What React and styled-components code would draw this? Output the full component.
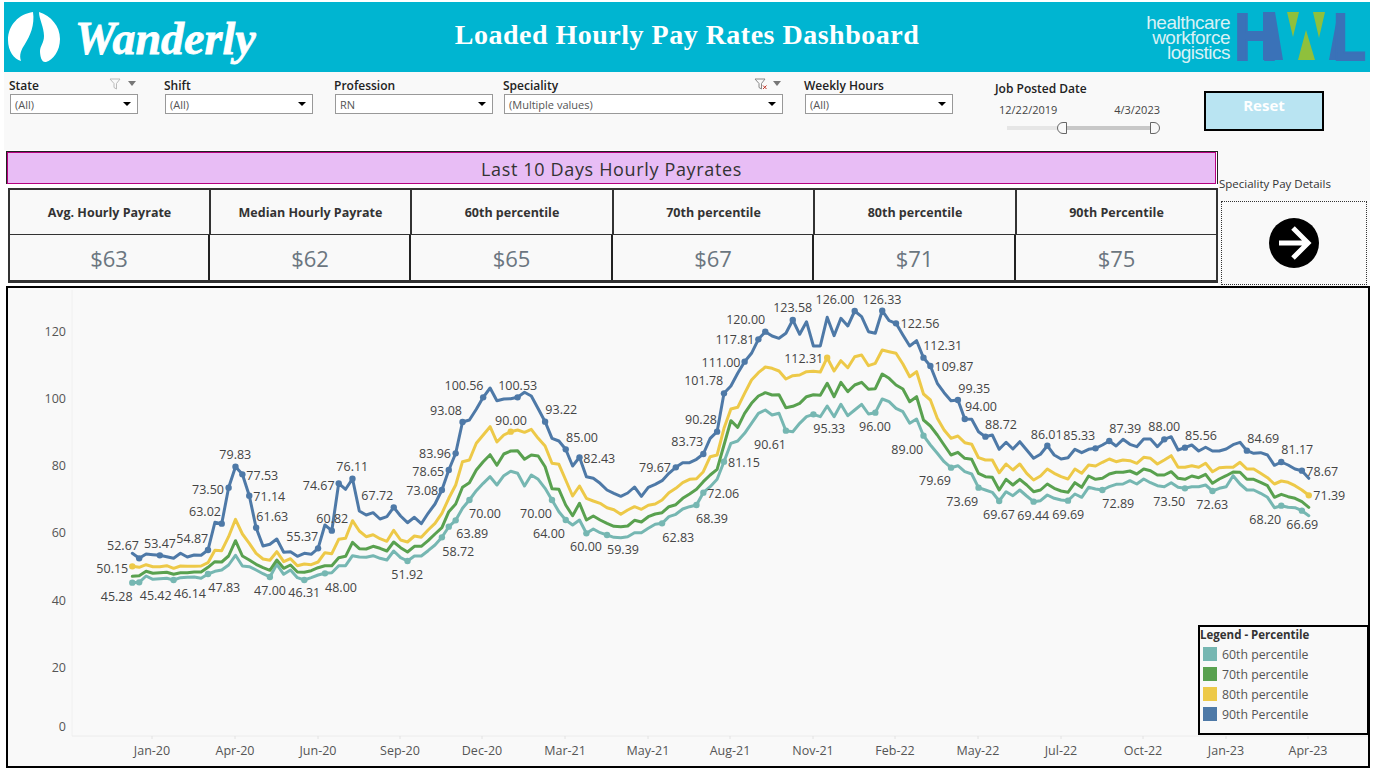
import React from "react";
import styled, { createGlobalStyle } from "styled-components";

const trace = (base, values) => values.map((v) => base + v / 3);

const COLORS = { p60: "#76b7b2", p70: "#59a14f", p80: "#edc948", p90: "#4e79a7" };

const blueY = [
  ...trace(430, [370,385,372,374,376,380,385,370,381,375,376,360,277,281,173,110,133,197,293,348,343,327,367,365,379,370,373,355,285,302,160,178,146,243,255,248,267,260,232,258,278,262,281,250,222,180,120]),
  ...trace(360, [280,186,180,148,112,84,122,117,116,112,97,108,146,185,235,243,268,318,292,350,355,370,390,400,409,399,381,409,382,373,362,340,322,308,308,298,282,235,215,100,78,40]),
  ...trace(290, [215,190,148,125,138,145,130,90,133,95,168,168,82,137,85,108,63,80,125,130,62,92,100,135,168,152,203,228,280,308,332,330,387,388,425,440,435,478,457,477,455]),
  ...trace(410, [120,145,133,107,135,147,143,118,128,118,115,105,93,108,88,103,110,87,87,110,88,80,120,113,105,123,112,123,123,117,104,97,122,130,128,135,166,156,165,177,182,205]),
];

const yellowY = [
  ...trace(430, [409,412,404,410,410,407,415,408,409,409,408,398,361,362,320,268,312,340,370,387,391,365,395,386,407,402,404,396,368,371,328,325,272,303,320,314,326,334,301,330,336,318,322,300,280,250,205]),
  ...trace(360, [375,305,300,250,225,200,246,225,215,210,217,208,235,258,310,313,360,408,378,415,423,430,443,449,463,450,440,448,436,432,420,398,385,368,358,356,335,290,285,205,147,142]),
  ...trace(290, [310,270,248,231,235,243,267,257,255,245,244,246,203,243,212,233,200,195,227,220,180,185,190,222,260,245,312,330,385,420,445,438,458,463,503,510,510,548,522,540,522]),
  ...trace(410, [190,210,198,177,190,200,207,177,190,165,168,157,147,155,150,152,160,142,145,162,150,137,172,172,167,172,160,185,173,172,172,157,177,177,190,203,222,213,217,227,240,256]),
];

const greenY = [
  ...trace(430, [439,437,424,430,428,427,433,428,428,426,426,412,395,396,378,332,378,390,403,413,421,390,415,405,426,427,422,413,407,407,383,379,337,356,357,349,355,363,336,353,366,349,349,332,312,293,245]),
  ...trace(360, [432,382,368,330,305,284,316,282,273,272,298,285,288,320,386,388,435,467,430,480,468,480,490,499,500,498,481,486,470,462,458,440,434,415,402,388,365,345,328,255,182,202]),
  ...trace(290, [370,340,318,308,315,314,353,349,340,320,314,316,280,320,277,305,285,277,298,296,252,265,285,297,335,320,390,408,435,465,495,487,505,508,550,560,562,600,568,585,568]),
  ...trace(410, [225,245,240,222,235,243,247,218,232,198,208,205,192,187,187,183,192,177,182,195,195,185,205,208,198,203,193,220,207,197,186,187,208,208,217,227,262,253,260,265,275,292]),
];

const tealY = [
  ...trace(430, [458,457,438,448,446,445,450,443,442,441,445,432,424,420,405,376,408,410,420,431,441,403,433,420,443,450,443,435,430,428,407,407,377,381,382,377,385,390,363,383,393,378,378,362,345,322,290]),
  ...trace(360, [481,445,420,392,370,350,375,347,334,340,378,345,358,385,420,455,480,495,480,520,507,518,525,532,533,530,518,518,505,493,490,470,463,447,440,435,398,380,358,305,250,243]),
  ...trace(290, [430,400,370,360,375,370,422,425,400,380,373,380,348,380,343,377,360,343,372,368,327,335,355,365,400,387,437,465,490,515,533,527,545,552,593,600,607,633,605,617,600]),
  ...trace(410, [258,275,272,255,265,270,272,252,262,232,237,240,230,223,222,212,222,207,218,227,230,218,232,235,230,230,225,243,235,230,197,222,240,240,250,262,293,287,292,293,302,317]),
];

const xAt = (i) => 132.3 + i * 6.88;

const SERIES = [
  { color: COLORS.p60, ys: tealY, dots: [0,1,6,11,20,25,28,40,45,46,47,49,61,63,66,69,77,82,83,86,95,99,108,115,119,123,126,131,136,141,153,157,167,170] },
  { color: COLORS.p70, ys: greenY, dots: [] },
  { color: COLORS.p80, ys: yellowY, dots: [0,55,101,171] },
  { color: COLORS.p90, ys: blueY, dots: [1,4,11,13,14,15,16,17,18,27,29,30,32,38,45,46,47,48,51,56,60,63,65,79,83,85,86,89,91,92,96,105,109,111,115,116,120,121,124,133,140,142,150,153,162,167,170] },
];

const LABELS = [
  ["52.67",123,545.7],["53.47",160,543],["54.87",192.3,538.7],["63.02",205,511],["73.50",208,489],["79.83",235.3,454.3],
  ["77.53",262.3,475.7],["71.14",269.3,496.7],["61.63",272.3,516],["55.37",302.3,536.7],["60.82",332.3,518.3],["74.67",318.7,485],
  ["76.11",352.3,466.7],["67.72",377.3,495.7],["73.08",422.3,490.7],["78.65",428.3,471.7],["83.96",435,453],["50.15",112.3,568.3],
  ["45.28",116.7,596.7],["45.42",155.7,595.7],["46.14",190,593.3],["47.83",224.3,587.3],["47.00",270,590.7],["46.31",304.3,592.7],
  ["48.00",341,587.7],["51.92",407.3,574.3],["100.56",464,385],["93.08",446,410],["90.00",511,420.7],["100.53",517.7,385],
  ["93.22",561.3,409.7],["85.00",582,437.7],["82.43",599.3,458.7],["79.67",655,467.3],["83.73",687.3,441.7],["90.28",701,419.3],
  ["101.78",703.7,380.7],["70.00",485,513.7],["70.00",536,513.7],["63.89",472.3,533.7],["58.72",458.3,551.7],["64.00",549,533.7],
  ["60.00",586,546.7],["59.39",623,549.7],["62.83",678.3,537.7],["68.39",712,518.3],["72.06",723.3,493.3],["81.15",744,462.3],
  ["90.61",770,444.3],["111.00",721,362.7],["117.81",735,339.3],["120.00",745.7,319.3],["123.58",792.7,307.7],["126.00",835,299.3],
  ["126.33",882,299],["122.56",920,323.3],["112.31",942.7,345.3],["109.87",954,366.7],["99.35",974.3,388.7],["94.00",981,406.3],
  ["88.72",1001,424.7],["112.31",803.7,358.3],["95.33",829.3,428.3],["96.00",875,426.7],["89.00",907.3,449.3],["79.69",935,480.7],
  ["73.69",962.3,501.7],["69.67",999,514.3],["86.01",1046.7,434],["85.33",1079.3,435.7],["87.39",1125.3,428.3],["88.00",1164.3,426.7],
  ["85.56",1201,435.7],["84.69",1263.3,438.7],["81.17",1297.3,449.3],["78.67",1322.3,471.3],["71.39",1329.3,495.7],["66.69",1302.3,524.3],
  ["68.20",1265.3,519.3],["72.63",1212.3,504.7],["73.50",1169.3,501.3],["72.89",1118.3,503.7],["69.69",1068.3,514.3],["69.44",1033.3,515.7],
];

const Y_TICKS = [["120",331],["100",398],["80",465],["60",532],["40",600],["20",667],["0",726]];
const X_TICKS = [["Jan-20",152],["Apr-20",235],["Jun-20",318],["Sep-20",400],["Dec-20",482],["Mar-21",565],["May-21",648],["Aug-21",730],["Nov-21",813],["Feb-22",895],["May-22",978],["Jul-22",1061],["Oct-22",1143],["Jan-23",1226],["Apr-23",1308]];

const KPIS = [
  ["Avg. Hourly Payrate", "$63"],
  ["Median Hourly Payrate", "$62"],
  ["60th percentile", "$65"],
  ["70th percentile", "$67"],
  ["80th percentile", "$71"],
  ["90th Percentile", "$75"],
];

const LEGEND = [
  ["60th percentile", COLORS.p60],
  ["70th percentile", COLORS.p70],
  ["80th percentile", COLORS.p80],
  ["90th Percentile", COLORS.p90],
];

const Funnel = ({ cleared }) => (
  <svg width="14" height="12" viewBox="0 0 14 12">
    <path d="M1 1h10L7.5 5.5V11L5 9.5V5.5z" fill="none" stroke={cleared ? "#888" : "#bbb"} strokeWidth="1" />
    {cleared && <path d="M9 7.5l3.5 3.5M12.5 7.5L9 11" stroke="#c0392b" strokeWidth="1" />}
  </svg>
);

const Filter = ({ label, value, width, gap, icons, cleared }) => (
  <FilterGroup $width={width} $gap={gap}>
    <FilterHead>
      <FilterLabel>{label}</FilterLabel>
      {icons && (
        <FilterIcons>
          <Funnel cleared={cleared} />
          <GrayCaret />
        </FilterIcons>
      )}
    </FilterHead>
    <Select>
      <SelectText>{value}</SelectText>
      <BlackCaret />
    </Select>
  </FilterGroup>
);

const PayChart = () => (
  <svg width="1360" height="478" viewBox="8 288 1360 478">
    <line x1="72" y1="290" x2="72" y2="736" stroke="#f0f0f0" />
    <line x1="72" y1="736" x2="1368" y2="736" stroke="#ececec" />
    {Y_TICKS.map(([t, y]) => (
      <AxisText key={t} x="66" y={y} textAnchor="end" dominantBaseline="central">{t}</AxisText>
    ))}
    {X_TICKS.map(([t, x]) => (
      <g key={t}>
        <line x1={x} y1="736" x2={x} y2="739" stroke="#e2e2e2" />
        <AxisText x={x} y="750" textAnchor="middle" dominantBaseline="central">{t}</AxisText>
      </g>
    ))}
    {SERIES.map((s) => (
      <g key={s.color}>
        <polyline
          points={s.ys.map((y, i) => `${xAt(i).toFixed(1)},${y.toFixed(1)}`).join(" ")}
          fill="none"
          stroke={s.color}
          strokeWidth="3"
          strokeLinejoin="round"
          strokeLinecap="round"
        />
        {s.dots.map((i) => (
          <circle key={i} cx={xAt(i)} cy={s.ys[i]} r="3.2" fill={s.color} />
        ))}
      </g>
    ))}
    {LABELS.map(([t, x, y], i) => (
      <PointLabel key={i} x={x} y={y} textAnchor="middle" dominantBaseline="central">{t}</PointLabel>
    ))}
  </svg>
);

export default function App() {
  return (
    <>
      <GlobalStyle />
      <Dashboard>
        <Banner>
          <Brand>
            <svg width="54" height="52" viewBox="0 0 54 52">
              <path d="M26 1C12 3 1 14 1 29c0 11 6 19 13 21-2-6 0-11 4-17 5-8 10-19 8-32z" fill="#fff" />
              <path d="M32 1c12 4 21 14 21 27 0 12-7 21-14 23-4 1-6-5-6-11 0-5 4-8 4-15 0-9-5-17-5-24z" fill="#fff" />
            </svg>
            <BrandName>Wanderly</BrandName>
          </Brand>
          <BannerTitle>Loaded Hourly Pay Rates Dashboard</BannerTitle>
          <Partner>
            <PartnerName>
              healthcare
              <br />
              workforce
              <br />
              logistics
            </PartnerName>
            <svg width="136" height="74" viewBox="0 -12 136 74">
              <LogoLetter x="0" y="48" fontSize="66" textLength="44" lengthAdjust="spacingAndGlyphs">H</LogoLetter>
              <polygon points="29,0 41,0 49,48 29,48" fill="#3a72b8" />
              <polygon points="53,0 65,0 59,25" fill="#8fc03c" />
              <polygon points="79,0 91,0 85,26" fill="#8fc03c" />
              <polygon points="72,18 81,48 64,48" fill="#8fc03c" />
              <polygon points="95,48 104,0 104,48" fill="#3a72b8" />
              <LogoLetter x="99" y="48" fontSize="66" textLength="33" lengthAdjust="spacingAndGlyphs">L</LogoLetter>
            </svg>
          </Partner>
        </Banner>

        <FilterBar>
          <Filter label="State" value="(All)" width={128} gap={0} icons />
          <Filter label="Shift" value="(All)" width={148} gap={27} />
          <Filter label="Profession" value="RN" width={158} gap={22} />
          <Filter label="Speciality" value="(Multiple values)" width={279} gap={11} icons cleared />
          <Filter label="Weekly Hours" value="(All)" width={148} gap={22} />
          <DateFilter>
            <DateLabel>Job Posted Date</DateLabel>
            <DateRange>
              <span>12/22/2019</span>
              <span>4/3/2023</span>
            </DateRange>
            <Slider>
              <SliderTrack $width={50} $active={false} />
              <SliderHandle $side="left" />
              <SliderTrack $width={83} $active />
              <SliderHandle $side="right" />
            </Slider>
          </DateFilter>
          <ResetButton>Reset</ResetButton>
        </FilterBar>

        <KpiSection>
          <KpiColumn>
            <TitleFrame>
              <TitleBar>Last 10 Days Hourly Payrates</TitleBar>
            </TitleFrame>
            <KpiTable>
              {KPIS.map(([label]) => (
                <KpiHeader key={label}>{label}</KpiHeader>
              ))}
              {KPIS.map(([label, value]) => (
                <KpiValue key={label}>{value}</KpiValue>
              ))}
            </KpiTable>
          </KpiColumn>
          <DetailColumn>
            <DetailLabel>Speciality Pay Details</DetailLabel>
            <DetailBox>
              <svg width="52" height="52" viewBox="0 0 52 52">
                <circle cx="26" cy="26" r="25" fill="#000" />
                <path d="M11 26h27M25 11l15 15-15 15" fill="none" stroke="#fff" strokeWidth="5" />
              </svg>
            </DetailBox>
          </DetailColumn>
        </KpiSection>

        <ChartPanel>
          <PayChart />
          <Legend>
            <LegendTitle>Legend - Percentile</LegendTitle>
            {LEGEND.map(([label, color]) => (
              <LegendRow key={label}>
                <Swatch $color={color} />
                {label}
              </LegendRow>
            ))}
          </Legend>
        </ChartPanel>
      </Dashboard>
    </>
  );
}

const FONT = `"Open Sans", "Noto Sans", sans-serif`;

const GlobalStyle = createGlobalStyle`
  body {
    margin: 0;
    background: #fff;
    font-family: ${FONT};
  }
`;

const Dashboard = styled.div`
  width: 1366px;
  margin: 2px 0 0 4px;
`;

const Banner = styled.header`
  height: 70px;
  background: #00b5d1;
  display: grid;
  grid-template-columns: 1fr auto 1fr;
  grid-template-rows: 70px;
  align-items: center;
`;

const Brand = styled.div`
  display: flex;
  align-items: center;
  gap: 14px;
  padding-left: 3px;
`;

const BrandName = styled.div`
  font-family: "Liberation Serif", serif;
  font-style: italic;
  font-weight: 700;
  font-size: 46px;
  line-height: 56px;
  color: #fff;
  -webkit-text-stroke: 0.8px #fff;
  margin-top: 4px;
`;

const BannerTitle = styled.h1`
  margin: 0 0 4px;
  font-family: "Liberation Serif", serif;
  font-weight: 700;
  font-size: 28px;
  letter-spacing: 0.5px;
  color: #fff;
  white-space: nowrap;
`;

const Partner = styled.div`
  display: flex;
  justify-content: flex-end;
  align-items: center;
  gap: 4px;
`;

const PartnerName = styled.div`
  font-family: "Liberation Sans", Arial, sans-serif;
  font-size: 19px;
  line-height: 15px;
  letter-spacing: -0.5px;
  color: #d9f1f5;
  text-align: right;
`;

const LogoLetter = styled.text`
  font-family: "Liberation Sans", Arial, sans-serif;
  font-weight: 700;
  fill: #3a72b8;
  stroke: #3a72b8;
  stroke-width: 2px;
`;

const FilterBar = styled.section`
  height: 78px;
  background: #f9f9f9;
  display: flex;
  align-items: flex-start;
  padding-left: 6px;
`;

const FilterGroup = styled.div`
  width: ${(p) => p.$width}px;
  margin-left: ${(p) => p.$gap}px;
  padding-top: 5px;
`;

const FilterHead = styled.div`
  display: flex;
  align-items: center;
  height: 17px;
`;

const FilterLabel = styled.div`
  font-size: 12px;
  font-weight: 600;
  color: #222;
  margin-left: -1px;
`;

const FilterIcons = styled.div`
  margin-left: auto;
  display: flex;
  align-items: center;
  gap: 5px;
  padding-right: 2px;
  margin-top: -4px;
`;

const GrayCaret = styled.span`
  border: 4px solid transparent;
  border-top: 5px solid #777;
  border-bottom: 0;
`;

const BlackCaret = styled.span`
  border: 4px solid transparent;
  border-top: 4px solid #000;
  border-bottom: 0;
`;

const Select = styled.div`
  height: 20px;
  box-sizing: border-box;
  border: 1px solid #999;
  background: #fff;
  display: flex;
  align-items: center;
  justify-content: space-between;
  padding: 0 6px 0 4px;
`;

const SelectText = styled.span`
  font-size: 11px;
  color: #555;
`;

const DateFilter = styled.div`
  width: 172px;
  margin-left: 42px;
  padding-top: 8px;
`;

const DateLabel = styled.div`
  font-size: 12px;
  font-weight: 600;
  color: #222;
`;

const DateRange = styled.div`
  display: flex;
  justify-content: space-between;
  font-size: 11px;
  color: #444;
  padding: 5px 7px 0 4px;
`;

const Slider = styled.div`
  display: flex;
  align-items: center;
  padding: 5px 0 0 12px;
`;

const SliderTrack = styled.div`
  width: ${(p) => p.$width}px;
  height: 4px;
  background: ${(p) => (p.$active ? "#c8c8c8" : "#e6e6e6")};
`;

const SliderHandle = styled.div`
  width: 10px;
  height: 12px;
  box-sizing: border-box;
  background: #f9f9f9;
  border: 1px solid #666;
  border-radius: ${(p) => (p.$side === "left" ? "6px 0 0 6px" : "0 6px 6px 0")};
`;

const ResetButton = styled.button`
  width: 120px;
  height: 40px;
  margin: 19px 0 0 37px;
  box-sizing: border-box;
  border: 2px solid #000;
  background: #b9e4f2;
  color: #fff;
  font-family: ${FONT};
  font-size: 15px;
  font-weight: 700;
  line-height: 24px;
  padding: 0;
  display: flex;
  justify-content: center;
  align-items: flex-start;
`;

const KpiSection = styled.section`
  display: flex;
  height: 136px;
  background: #f9f9f9;
  margin-left: 0;
`;

const KpiColumn = styled.div`
  width: 1214px;
  background: #fff;
  padding: 1px 0 0 2px;
  box-sizing: border-box;
`;

const TitleFrame = styled.div`
  width: 1212px;
  box-sizing: border-box;
  border: 1px solid #222;
  border-bottom: 0;
`;

const TitleBar = styled.div`
  height: 32px;
  box-sizing: border-box;
  margin-right: 1px;
  padding-top: 1px;
  border: 1px solid #b5007f;
  background: #e8bdf5;
  color: #333;
  font-size: 18px;
  letter-spacing: 0.65px;
  display: flex;
  align-items: center;
  justify-content: center;
`;

const KpiTable = styled.div`
  margin: 4px 0 0 2px;
  width: 1210px;
  height: 95px;
  box-sizing: border-box;
  border: 2px solid #333;
  border-bottom-width: 3px;
  background: #f9f9f9;
  display: grid;
  grid-template-columns: 201px 201px 202px 201px 202px 1fr;
  grid-template-rows: 45px 1fr;
`;

const KpiHeader = styled.div`
  display: flex;
  align-items: center;
  justify-content: center;
  font-size: 12.5px;
  font-weight: 700;
  color: #333;
  border-bottom: 1px solid #333;
  border-right: 2px solid #333;
  &:nth-child(6) {
    border-right: 0;
  }
`;

const KpiValue = styled.div`
  display: flex;
  align-items: center;
  justify-content: center;
  font-size: 22px;
  color: #6b7680;
  border-right: 2px solid #222;
  margin-right: 1px;
  &:last-child {
    border-right: 0;
    margin-right: 0;
  }
`;

const DetailColumn = styled.div`
  width: 152px;
  padding: 26px 0 0 1px;
  box-sizing: border-box;
`;

const DetailLabel = styled.div`
  font-size: 11.5px;
  color: #333;
  height: 25px;
  white-space: nowrap;
`;

const DetailBox = styled.div`
  width: 146px;
  height: 84px;
  margin-left: 2px;
  box-sizing: border-box;
  border: 1px dotted #333;
  display: flex;
  align-items: center;
  justify-content: center;
`;

const ChartPanel = styled.section`
  position: relative;
  width: 1364px;
  height: 482px;
  margin-left: 2px;
  box-sizing: border-box;
  border: 2px solid #000;
  background: #f9f9f9;
  svg {
    display: block;
  }
`;

const AxisText = styled.text`
  font-family: ${FONT};
  font-size: 12.5px;
  fill: #555;
`;

const PointLabel = styled.text`
  font-family: ${FONT};
  font-size: 12.5px;
  fill: #444;
`;

const Legend = styled.div`
  position: absolute;
  right: -1px;
  top: 337px;
  width: 171px;
  height: 110px;
  box-sizing: border-box;
  border: 2px solid #000;
  background: #f9f9f9;
  padding: 0;
`;

const LegendTitle = styled.div`
  font-size: 11.5px;
  font-weight: 700;
  color: #333;
  height: 17px;
  line-height: 15px;
`;

const LegendRow = styled.div`
  display: flex;
  align-items: center;
  gap: 5px;
  height: 20px;
  padding-left: 3px;
  font-size: 12.3px;
  color: #555;
`;

const Swatch = styled.span`
  width: 14px;
  height: 14px;
  background: ${(p) => p.$color};
`;
